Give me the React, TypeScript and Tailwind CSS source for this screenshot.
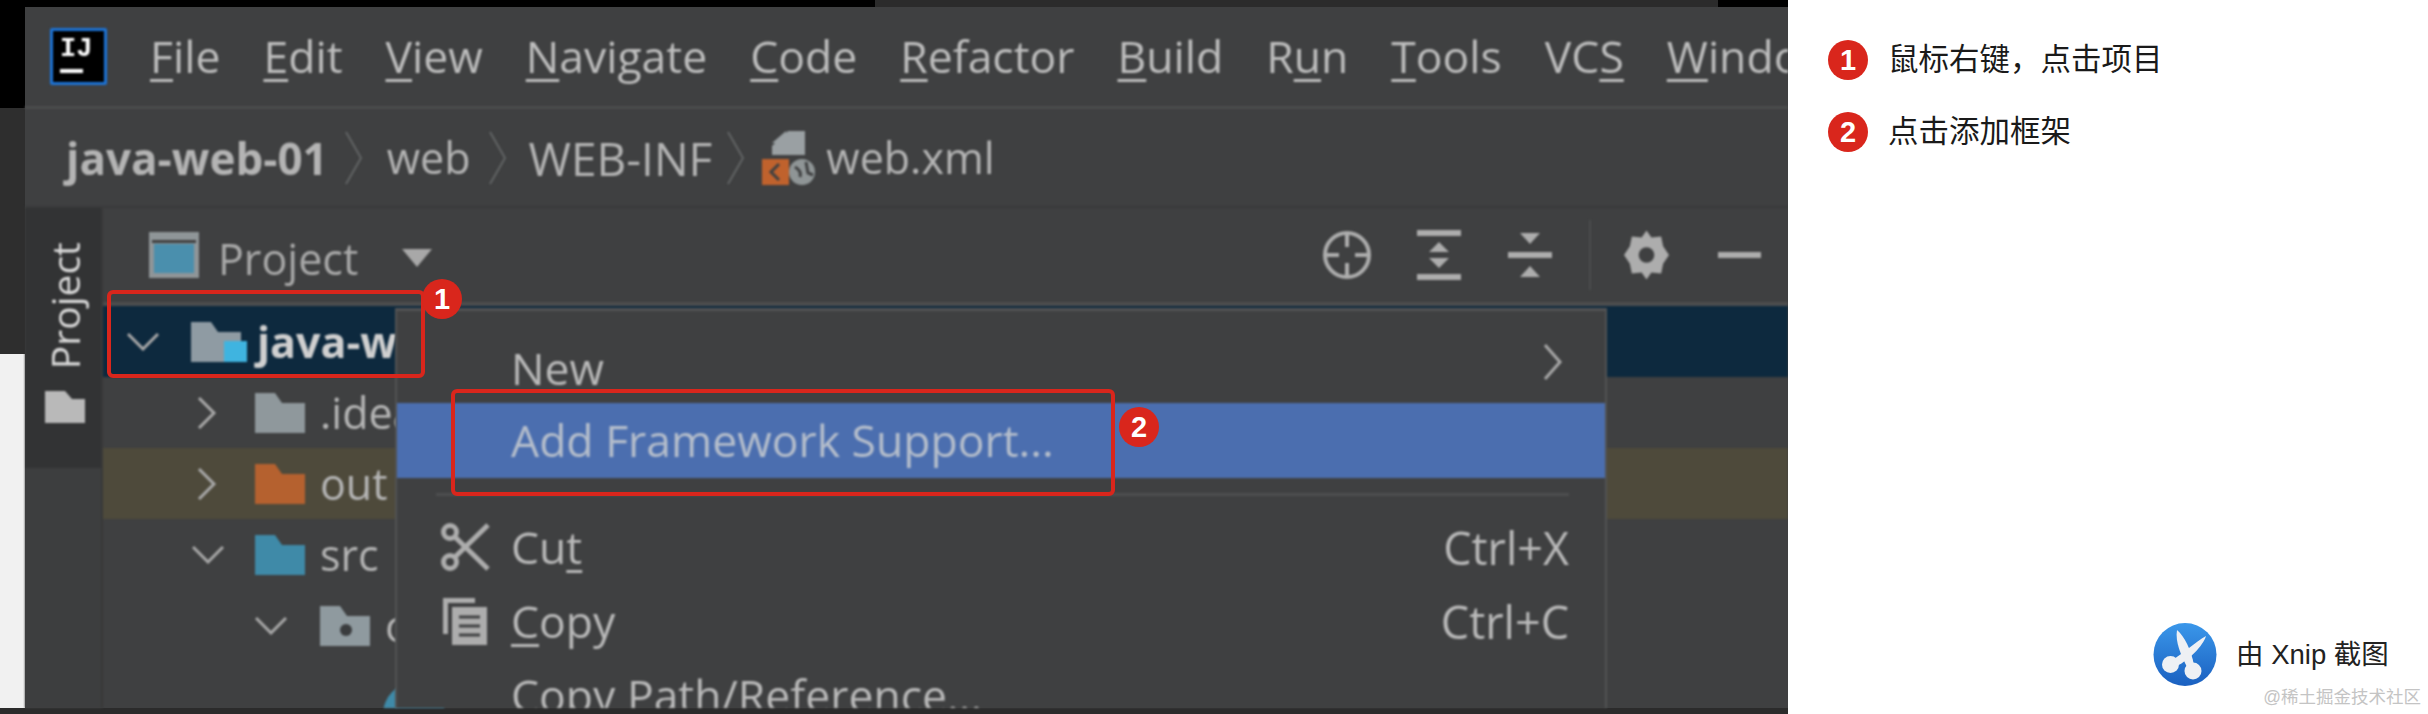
import React from "react";

const ui = "font-['Open_Sans','Noto_Sans',sans-serif]";
const cjk = "font-['Liberation_Sans','Noto_Sans_CJK_SC',sans-serif]";

function U({ children }: { children: React.ReactNode }) {
  return <span className="underline decoration-[3px] underline-offset-[6px] [text-decoration-skip-ink:none]">{children}</span>;
}

function Folder({ color, w = 50, h = 40, dot, square }: { color: string; w?: number; h?: number; dot?: boolean; square?: boolean }) {
  return (
    <svg width={w + (square ? 6 : 0)} height={h} viewBox={`0 0 ${w + (square ? 6 : 0)} ${h}`} className="shrink-0">
      <path d={`M0 0H20L27 ${h * 0.25}H${w}V${h}H0Z`} fill={color} />
      {dot && <circle cx={w * 0.52} cy={h * 0.6} r={6} fill="#3a3c3e" />}
      {square && <rect x={w - 17} y={h - 21} width={23} height={21} fill="#3fb4e0" />}
    </svg>
  );
}

function ChevR({ w = 20, h = 32 }: { w?: number; h?: number }) {
  return (
    <svg width={w} height={h} viewBox={`0 0 ${w} ${h}`} className="shrink-0">
      <path d={`M2 1L${w - 3} ${h / 2}L2 ${h - 1}`} fill="none" stroke="#a8a8a8" strokeWidth={3} />
    </svg>
  );
}

function ChevD() {
  return (
    <svg width={32} height={18} viewBox="0 0 32 18" className="shrink-0">
      <path d="M1 1L16 16L31 1" fill="none" stroke="#a8a8a8" strokeWidth={3} />
    </svg>
  );
}

function Crumb() {
  return (
    <svg width={18} height={54} viewBox="0 0 18 54" className="shrink-0">
      <path d="M1 1L16 27L1 53" fill="none" stroke="#626465" strokeWidth={2} />
    </svg>
  );
}

function Badge({ n }: { n: number }) {
  return (
    <div className="flex h-[40px] w-[40px] shrink-0 items-center justify-center rounded-full bg-[#d9261c] font-['Liberation_Sans',sans-serif] text-[29px] font-bold leading-none text-white">
      {n}
    </div>
  );
}

const Row = ({ className = "", children }: { className?: string; children: React.ReactNode }) => (
  <div className={`flex h-[71px] shrink-0 items-center ${className}`}>{children}</div>
);

const menus: React.ReactNode[] = [
  <><U>F</U>ile</>,
  <><U>E</U>dit</>,
  <><U>V</U>iew</>,
  <><U>N</U>avigate</>,
  <><U>C</U>ode</>,
  <><U>R</U>efactor</>,
  <><U>B</U>uild</>,
  <>R<U>u</U>n</>,
  <><U>T</U>ools</>,
  <>VC<U>S</U></>,
  <><U>W</U>indow</>,
];

export default function App() {
  return (
    <div className="flex h-[714px] w-[2428px] overflow-hidden bg-white">
      {/* Screenshot */}
      <div className={`flex h-full w-[1788px] shrink-0 flex-col overflow-hidden bg-[#2b2b2b] ${ui}`}>
        <div className="flex h-[7px] shrink-0">
          <div className="w-[875px] bg-black" />
          <div className="flex-1 bg-[#2b2b2b]" />
          <div className="w-[70px] bg-black" />
        </div>
        <div className="flex min-h-0 flex-1">
          <div className="flex w-[25px] shrink-0 flex-col">
            <div className="h-[101px] bg-black" />
            <div className="h-[246px] bg-[#2e2e2e]" />
            <div className="flex-1 bg-[#f1f1f1]" />
          </div>
          <div className="relative flex min-w-0 flex-1 flex-col bg-[#3f4041]">
            <div className="flex min-h-0 flex-1 flex-col blur-[0.8px]">
              {/* Menu bar */}
              <div className="flex h-[102px] shrink-0 items-center overflow-hidden border-b-[3px] border-[#4b4c4d] pl-[25px]">
                <div className="mr-[43px] flex h-[57px] w-[57px] shrink-0 flex-col justify-between rounded-[2px] border-[3px] border-[#1c73d6] bg-black pb-[9px] pl-[7px] pt-[5px] font-['Liberation_Mono',monospace] text-[27px] font-bold leading-[26px] text-white">
                  <span>IJ</span>
                  <span className="h-[4px] w-[23px] bg-white" />
                </div>
                <div className="flex gap-[43px] whitespace-nowrap text-[44.5px] leading-none text-[#bdbdbd]">
                  {menus.map((m, i) => (
                    <span key={i}>{m}</span>
                  ))}
                </div>
              </div>
              {/* Breadcrumb */}
              <div className="flex h-[99px] shrink-0 items-center whitespace-nowrap border-b-[2px] border-[#393a3b] pl-[41px] text-[43px] leading-none text-[#b4b4b4]">
                <span className="text-[44px] font-bold">java-web-01</span>
                <span className="ml-[17px] mr-[24px]"><Crumb /></span>
                <span>web</span>
                <span className="ml-[18px] mr-[22px]"><Crumb /></span>
                <span className="text-[46px]">WEB-INF</span>
                <span className="ml-[15px] mr-[17px]"><Crumb /></span>
                <svg width={54} height={54} viewBox="0 0 54 54" className="shrink-0">
                  <path d="M26 0H43V24H10V15Z" fill="#9aa0a3" />
                  <path d="M10 12L24 0V12Z" fill="#9aa0a3" />
                  <rect x="0" y="28" width="27" height="26" fill="#c0622d" />
                  <path d="M17 33L9 41L17 49" fill="none" stroke="#3f4041" strokeWidth={3} />
                  <circle cx="40" cy="41" r="13" fill="#8f9596" />
                  <path d="M33 36Q40 40 38 46M44 31L46 42L51 44" fill="none" stroke="#3f4041" strokeWidth={3} />
                </svg>
                <span className="ml-[10px]">web.xml</span>
              </div>
              <div className="flex min-h-0 flex-1">
                {/* Tool rail */}
                <div className="flex w-[78px] shrink-0 flex-col border-r-[2px] border-[#383939] bg-[#3d3e3f]">
                  <div className="flex h-[260px] flex-col items-center bg-[#323334] pl-[3px] pt-[34px]">
                    <span className="rotate-180 text-[39px] leading-none text-[#d8d8d8] [writing-mode:vertical-rl]">Project</span>
                    <div className="mt-[22px]"><Folder color="#b9b9b9" w={40} h={32} /></div>
                  </div>
                </div>
                {/* Project panel */}
                <div className="flex min-w-0 flex-1 flex-col">
                  <div className="flex h-[98px] shrink-0 items-center border-b-[4px] border-[#4c4d4e] pl-[46px] pr-[27px]">
                    <svg width={50} height={46} viewBox="0 0 50 46" className="shrink-0">
                      <rect width="50" height="46" fill="#8f9598" />
                      <rect x="5" y="12" width="40" height="29" fill="#4a8fad" />
                      <rect x="3" y="8" width="44" height="3" fill="#3f4041" />
                    </svg>
                    <span className="ml-[19px] pt-[6px] text-[43px] leading-none text-[#a9a9a9]">Project</span>
                    <svg width={30} height={18} viewBox="0 0 30 18" className="ml-[44px] mt-[6px] shrink-0">
                      <path d="M0 0H30L15 18Z" fill="#a8a8a8" />
                    </svg>
                    <div className="ml-auto flex items-center">
                      <svg width={50} height={50} viewBox="0 0 50 50" className="shrink-0">
                        <circle cx="25" cy="25" r="22" fill="none" stroke="#adadad" strokeWidth={4} />
                        <path d="M25 3V17M25 33V47M3 25H17M33 25H47" stroke="#adadad" strokeWidth={4} />
                      </svg>
                      <svg width={44} height={50} viewBox="0 0 44 50" className="ml-[45px] shrink-0">
                        <path d="M0 0H44V6H0ZM0 44H44V50H0ZM22 12L32 22H12ZM22 38L12 28H32Z" fill="#adadad" />
                      </svg>
                      <svg width={44} height={44} viewBox="0 0 44 44" className="ml-[47px] shrink-0">
                        <path d="M0 19H44V25H0ZM12 0H32L22 11ZM12 44H32L22 33Z" fill="#adadad" />
                      </svg>
                      <div className="ml-[37px] h-[70px] w-[2px] bg-[#4c4d4e]" />
                      <svg width={45} height={50} viewBox="0 0 46 50" className="ml-[33px] shrink-0">
                        <path d="M23 0L28 7L38 6L40 16L46 25L40 34L38 44L28 43L23 50L18 43L8 44L6 34L0 25L6 16L8 6L18 7Z" fill="#adadad" />
                        <circle cx="23" cy="25" r="8" fill="#3f4041" />
                      </svg>
                      <div className="ml-[49px] h-[6px] w-[43px] bg-[#adadad]" />
                    </div>
                  </div>
                  {/* Tree */}
                  <div className="flex min-h-0 flex-1 flex-col overflow-hidden whitespace-nowrap text-[43px] leading-none text-[#b5b5b5]">
                    <Row className="bg-[#0d293e] pl-[24px] font-bold text-[#d0d0d0]">
                      <ChevD />
                      <span className="ml-[32px]"><Folder color="#8f9ba3" square /></span>
                      <span className="ml-[10px]">java-web-01</span>
                    </Row>
                    <Row className="pl-[94px]">
                      <ChevR />
                      <span className="ml-[38px]"><Folder color="#8f989c" /></span>
                      <span className="ml-[15px]">.idea</span>
                    </Row>
                    <Row className="bg-[#4e4a3b] pl-[94px]">
                      <ChevR />
                      <span className="ml-[38px]"><Folder color="#b5612f" /></span>
                      <span className="ml-[15px]">out</span>
                    </Row>
                    <Row className="pl-[89px]">
                      <ChevD />
                      <span className="ml-[31px]"><Folder color="#3f8aa8" /></span>
                      <span className="ml-[15px]">src</span>
                    </Row>
                    <Row className="pl-[152px]">
                      <ChevD />
                      <span className="ml-[33px]"><Folder color="#8f9a9f" dot /></span>
                      <span className="ml-[15px]">com</span>
                    </Row>
                    <Row className="pl-[280px]">
                      <div className="mt-[34px] h-[62px] w-[62px] shrink-0 rounded-full bg-[#3f8aa8]" />
                    </Row>
                  </div>
                </div>
              </div>
            </div>
            {/* Context menu overlay */}
            <div className="absolute bottom-0 left-[370px] top-[301px] flex w-[1212px] flex-col overflow-hidden whitespace-nowrap border-x-[2px] border-t-[3px] border-[#525354] bg-[#3f4041] text-[44.5px] leading-none text-[#b9b9b9] blur-[0.8px]">
              <div className="flex h-[92px] shrink-0 items-center justify-between pl-[114px] pr-[42px] pt-[22px]">
                <span>New</span>
                <span className="-mt-[12px]"><ChevR w={20} h={36} /></span>
              </div>
              <div className="flex h-[75px] shrink-0 items-center bg-[#4b6eaf] pl-[114px] text-[#b4bdcb]">Add Framework Support...</div>
              <div className="flex h-[32px] shrink-0 items-center pl-[39px] pr-[36px]">
                <div className="h-[3px] w-full bg-[#4d4e4f]" />
              </div>
              <div className="flex h-[74px] shrink-0 items-center pl-[44px] pr-[36px]">
                <div className="w-[70px]">
                  <svg width={49} height={48} viewBox="0 0 49 48">
                    <g fill="none" stroke="#adadad" strokeWidth={5}>
                      <circle cx="9" cy="9" r="6.5" />
                      <circle cx="9" cy="39" r="6.5" />
                      <path d="M14 14L47 46M14 34L47 2" />
                    </g>
                  </svg>
                </div>
                <span>Cu<U>t</U></span>
                <span className="ml-auto text-[45px]">Ctrl+X</span>
              </div>
              <div className="flex h-[74px] shrink-0 items-center pl-[46px] pr-[36px]">
                <div className="w-[68px]">
                  <svg width={44} height={47} viewBox="0 0 44 47">
                    <path d="M0 0H32V5H5V36H0Z" fill="#adadad" />
                    <path d="M9 9H44V47H9Z" fill="#adadad" />
                    <path d="M16 19H37M16 28H37M16 37H37" stroke="#3f4041" strokeWidth={3} />
                  </svg>
                </div>
                <span><U>C</U>opy</span>
                <span className="ml-auto text-[45px]">Ctrl+C</span>
              </div>
              <div className="flex h-[74px] shrink-0 items-center pl-[114px]">Copy Path/Reference...</div>
            </div>
            {/* Annotation overlays */}
            <div className="absolute left-[82px] top-[283px] h-[88px] w-[318px] rounded-[6px] border-[4px] border-[#d9261c]" />
            <div className="absolute left-[397px] top-[272px]"><Badge n={1} /></div>
            <div className="absolute left-[426px] top-[382px] h-[107px] w-[664px] rounded-[6px] border-[4px] border-[#d9261c]" />
            <div className="absolute left-[1094px] top-[400px]"><Badge n={2} /></div>
          </div>
        </div>
        <div className="h-[6px] shrink-0 bg-[#2b2b2b]" />
      </div>
      {/* Notes */}
      <div className={`relative flex h-full min-w-0 flex-1 flex-col pl-[40px] pt-[40px] ${cjk}`}>
        <div className="flex flex-col gap-[32px] text-[30.5px] leading-none text-[#1a1a1a]">
          <div className="flex items-center gap-[20px]"><Badge n={1} /><span className="-mt-[1px]">鼠标右键，点击项目</span></div>
          <div className="flex items-center gap-[20px]"><Badge n={2} /><span className="-mt-[1px]">点击添加框架</span></div>
        </div>
        <div className="mt-auto mb-[27px] ml-[325px] flex items-center gap-[19px]">
          <svg width={64} height={65} viewBox="0 0 64 65" className="shrink-0">
            <defs>
              <linearGradient id="xg" x1="0" y1="0" x2="0" y2="1">
                <stop offset="0" stopColor="#3a97ea" />
                <stop offset="1" stopColor="#1b60c0" />
              </linearGradient>
            </defs>
            <circle cx="32" cy="32.5" r="31.5" fill="url(#xg)" />
            <g fill="#eef0f4">
              <path d="M24 8C31 14 38 27 41 43L34 45C28 33 22 20 24 8Z" />
              <path d="M53 14C50 24 36 38 24 44L19 38C30 32 42 20 53 14Z" />
              <circle cx="17.5" cy="42.5" r="8.5" />
              <circle cx="40" cy="49" r="8.5" />
            </g>
          </svg>
          <span className="text-[27.5px] leading-none text-[#222]">由 Xnip 截图</span>
        </div>
        <span className="absolute bottom-[7px] right-[7px] text-[17.5px] leading-[20px] text-[#c4c4c4]">@稀土掘金技术社区</span>
      </div>
    </div>
  );
}
